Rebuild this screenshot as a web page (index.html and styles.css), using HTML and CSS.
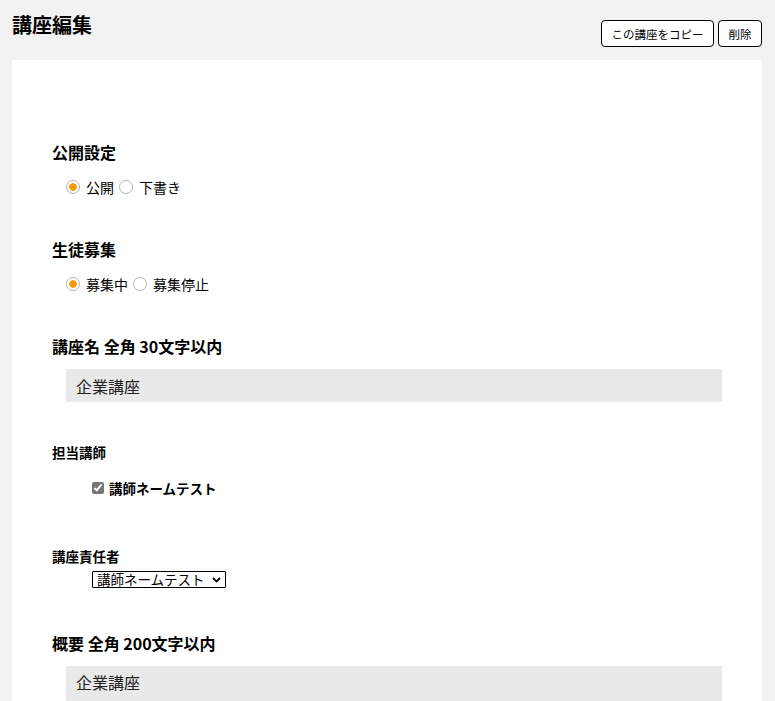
FILE: index.html
```html
<!DOCTYPE html>
<html lang="ja">
<head>
  <meta charset="utf-8">
  <title>講座編集</title>
  <link rel="stylesheet" href="styles.css">
</head>
<body>
  <div class="head">
    <h1>講座編集</h1>
    <div class="actions">
      <button class="btn" type="button">この講座をコピー</button>
      <button class="btn" type="button">削除</button>
    </div>
  </div>

  <form class="panel">
    <div class="field">
      <h3>公開設定</h3>
      <div class="radios">
        <label><input type="radio" name="pub" checked>公開</label>
        <label><input type="radio" name="pub">下書き</label>
      </div>
    </div>

    <div class="field">
      <h3>生徒募集</h3>
      <div class="radios">
        <label><input type="radio" name="rec" checked>募集中</label>
        <label><input type="radio" name="rec">募集停止</label>
      </div>
    </div>

    <div class="field">
      <h3>講座名 全角 30文字以内</h3>
      <input class="text" type="text" value="企業講座">
    </div>

    <div class="field teacher">
      <h4>担当講師</h4>
      <label class="check"><input type="checkbox" checked>講師ネームテスト</label>
    </div>

    <div class="field owner">
      <h4>講座責任者</h4>
      <div class="sel-wrap">
        <select class="sel">
          <option>講師ネームテスト</option>
        </select>
        <svg class="chev" width="9" height="6" viewBox="0 0 9 6"><path d="M1 1l3.5 3.5L8 1" fill="none" stroke="#000" stroke-width="1.8"/></svg>
      </div>
    </div>

    <div class="field">
      <h3>概要 全角 200文字以内</h3>
      <textarea class="text area">企業講座</textarea>
    </div>
  </form>
</body>
</html>
```

FILE: styles.css
```css
html { background: #f2f2f2; }
body { margin: 0; font-family: "Noto Sans CJK JP", "Noto Sans", sans-serif; color: #000; }

.head { display: flex; justify-content: space-between; padding: 0 13px 0 12px; height: 60px; }
.head h1 { margin: 0; padding-top: 10px; font-size: 20px; font-weight: bold; line-height: 30px; }
.actions { display: flex; gap: 4px; padding-top: 20px; }
.btn { height: 27px; padding: 0 9.5px; font-family: inherit; font-size: 11.5px; background: #fff; border: 1px solid #000; border-radius: 4px; color: #000; }

.panel { background: #fff; margin: 0 13px 0 12px; padding: 80px 40px 20px 40px; }

.field { margin-bottom: 40px; }
.field.teacher { margin-bottom: 48px; }
.field.owner { margin-bottom: 43px; }
.field h3 { margin: 0 0 11px; font-size: 16px; font-weight: bold; line-height: 24px; }
.field h4 { margin: 0 0 16px; font-size: 13.5px; font-weight: bold; line-height: 20px; }
.owner h4 { margin-bottom: 5px; }

.radios { padding-left: 14px; margin-top: 13px; font-size: 14px; line-height: 20px; display: flex; gap: 5px; }
.radios label { display: flex; align-items: center; gap: 6px; }
.radios input { appearance: none; -webkit-appearance: none; margin: 0; width: 14px; height: 14px; border: 1px solid #b5b5b5; border-radius: 50%; background: #fff; }
.radios input:checked { background: radial-gradient(circle, #ff9800 0 3.5px, #fff 4px); }

.text { display: block; box-sizing: border-box; width: calc(100% - 14px); margin-left: 14px; height: 33px; padding: 0 10px; border: 0; background: #e9e9e9; font-family: inherit; font-size: 16px; color: #222; }
.area { height: 80px; padding-top: 3px; resize: none; line-height: 26px; }

.check { display: flex; align-items: center; gap: 5px; padding-left: 40px; font-size: 13.5px; line-height: 20px; font-weight: bold; }
.check input { margin: 0; width: 12px; height: 12px; accent-color: #767676; }

.sel-wrap { position: relative; margin-left: 40px; width: 134px; }
.sel { appearance: none; -webkit-appearance: none; display: block; box-sizing: border-box; width: 134px; height: 17px; padding: 0 16px 0 4px; font-family: "Noto Sans CJK JP", sans-serif; font-size: 13.5px; line-height: 15px; border: 1px solid #000; border-radius: 1px; background: #fff; color: #000; overflow: visible; }
.chev { position: absolute; right: 5px; top: 6px; pointer-events: none; }
```
